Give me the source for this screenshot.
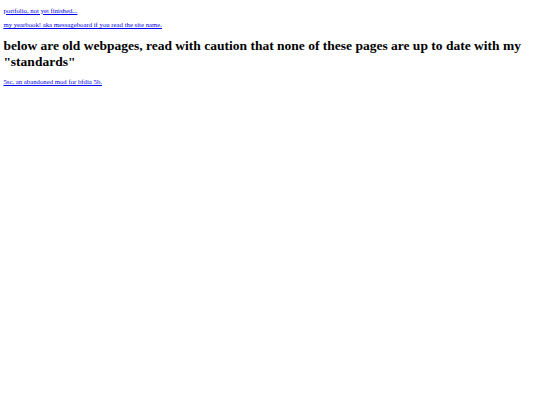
import React from "react";

export default function App() {
  return (
    <div className="m-[3.375px] text-black" style={{ fontFamily: '"Liberation Serif", serif' }}>
      <p className="my-[6.75px] text-[6.75px] leading-[1.15]">
        <a href="#" className="text-[#0000ee] underline">portfolio, not yet finished...</a>
      </p>
      <p className="my-[6.75px] text-[6.75px] leading-[1.15]">
        <a href="#" className="text-[#0000ee] underline">my yearbook! aka messageboard if you read the site name.</a>
      </p>
      <h1 className="my-[9px] text-[13.5px] font-bold leading-[1.15]">
        below are old webpages, read with caution that none of these pages are up to date with my "standards"
      </h1>
      <p className="my-[6.75px] text-[6.75px] leading-[1.15]">
        <a href="#" className="text-[#0000ee] underline">5sc, an abandoned mod for bfdia 5b.</a>
      </p>
    </div>
  );
}
